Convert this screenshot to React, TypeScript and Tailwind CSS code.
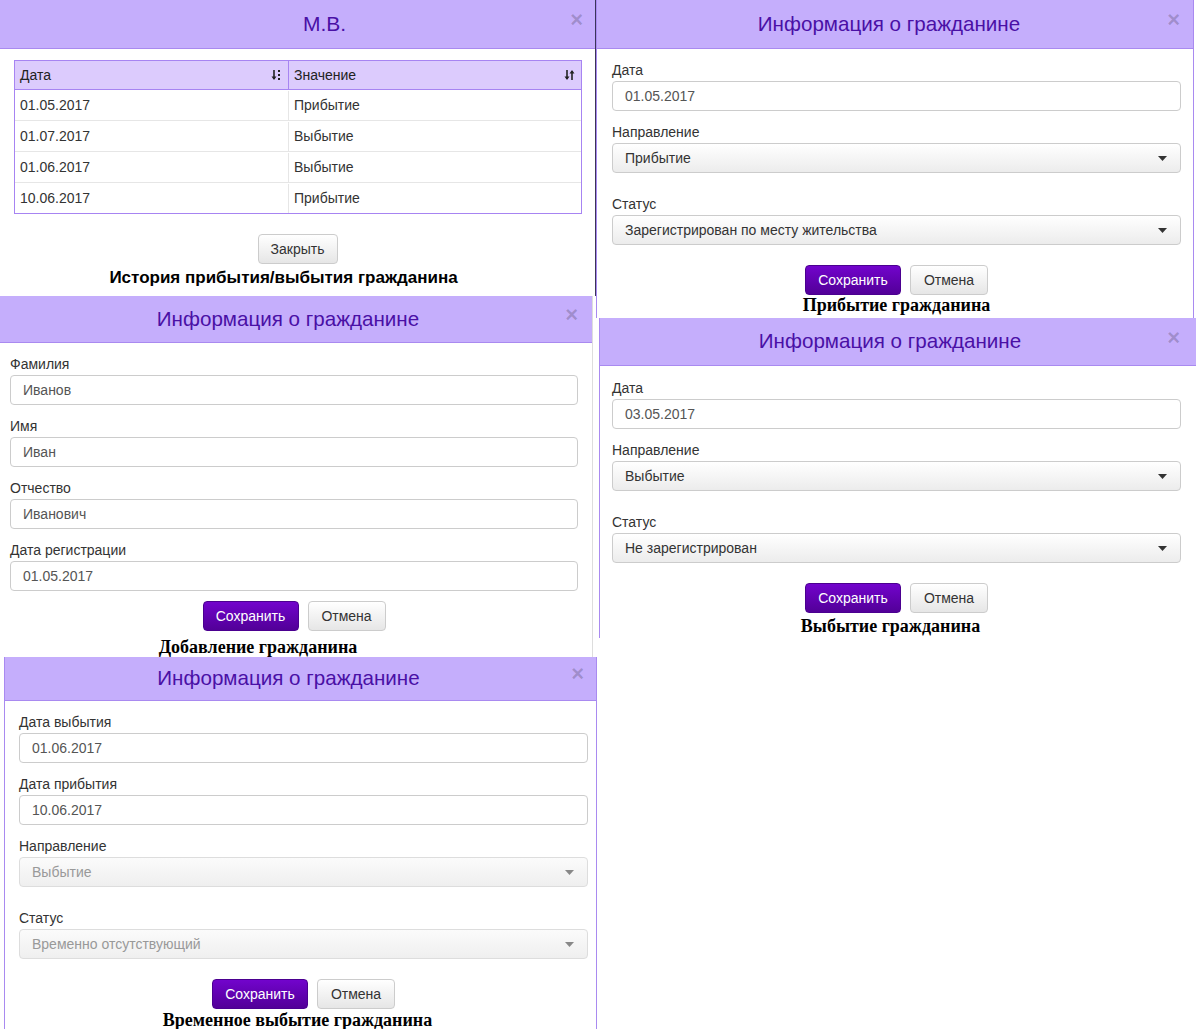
import React from "react";

const FONT = { fontFamily: '"Liberation Sans", Arial, sans-serif' };

function CloseX({ top, right }: { top: number; right: number }) {
  return (
    <span
      className="absolute text-[22px] font-bold leading-none text-black/20"
      style={{ top, right }}
    >
      ×
    </span>
  );
}

function Header({
  title,
  h,
  closeTop,
  closeRight,
  shift,
  size = 20.6,
}: {
  title: string;
  h: number;
  closeTop: number;
  closeRight: number;
  shift: number;
  size?: number;
}) {
  return (
    <div
      className="relative flex shrink-0 items-center justify-center border-b border-[#a98af0] bg-[#c5aefc]"
      style={{ height: h }}
    >
      <span
        className="text-[#4a10a6]"
        style={{ fontSize: size, marginLeft: shift > 0 ? shift * 2 : 0, marginRight: shift < 0 ? -shift * 2 : 0 }}
      >
        {title}
      </span>
      <CloseX top={closeTop} right={closeRight} />
    </div>
  );
}

function Label({ children }: { children: React.ReactNode }) {
  return <div className="h-[20px] text-[14px] leading-[22px] text-[#333]">{children}</div>;
}

function Input({ value }: { value: string }) {
  return (
    <div className="mt-[2px] flex h-[30px] items-center rounded-[4px] border border-[#cccccc] bg-white pl-[12px] text-[14px] text-[#555]">
      {value}
    </div>
  );
}

function Caret({ light }: { light?: boolean }) {
  return (
    <svg width="9" height="5" viewBox="0 0 9 5" className="absolute right-[13px] top-[12px]">
      <path d="M0 0 L9 0 L4.5 5 Z" fill={light ? "#888" : "#333"} />
    </svg>
  );
}

function Select({ value, disabled }: { value: string; disabled?: boolean }) {
  return (
    <div
      className={
        disabled
          ? "relative mt-[2px] flex h-[30px] items-center rounded-[4px] border border-[#dddddd] bg-linear-to-b from-[#fbfbfb] to-[#efefef] pl-[12px] text-[14px] text-[#999]"
          : "relative mt-[2px] flex h-[30px] items-center rounded-[4px] border border-[#cccccc] bg-linear-to-b from-white to-[#ececec] pl-[12px] text-[14px] text-[#333]"
      }
    >
      {value}
      <Caret light={disabled} />
    </div>
  );
}

function Buttons() {
  return (
    <div className="flex justify-center gap-[9px]">
      <div className="flex h-[30px] w-[96px] items-center justify-center rounded-[4px] border border-[#4b0090] bg-linear-to-b from-[#7204cc] to-[#520098] text-[14px] text-white">
        Сохранить
      </div>
      <div className="flex h-[30px] w-[78px] items-center justify-center rounded-[4px] border border-[#cccccc] bg-linear-to-b from-white to-[#e6e6e6] text-[14px] text-[#333]">
        Отмена
      </div>
    </div>
  );
}

function Caption({ text, shift = 0 }: { text: string; shift?: number }) {
  return (
    <div
      className="text-center text-[18px] font-bold leading-[20px] text-black"
      style={{
        fontFamily: '"Liberation Serif", "Times New Roman", serif',
        marginLeft: shift < 0 ? 0 : shift * 2,
        marginRight: shift < 0 ? -shift * 2 : 0,
      }}
    >
      {text}
    </div>
  );
}

function SortIconA() {
  return (
    <svg width="10" height="12" viewBox="0 0 10 12">
      <path d="M3 1 V10" stroke="#222" strokeWidth="1.6" />
      <path d="M0.5 7.5 L3 11 L5.5 7.5 Z" fill="#222" />
      <rect x="7" y="1" width="2" height="2" fill="#222" />
      <rect x="7" y="5" width="2" height="2" fill="#222" />
      <rect x="7" y="9" width="2" height="2" fill="#222" />
    </svg>
  );
}

function SortIconB() {
  return (
    <svg width="11" height="12" viewBox="0 0 11 12">
      <path d="M3 1 V10" stroke="#222" strokeWidth="1.6" />
      <path d="M0.5 7.5 L3 11 L5.5 7.5 Z" fill="#222" />
      <path d="M8 2 V11" stroke="#222" strokeWidth="1.6" />
      <path d="M5.5 4.5 L8 1 L10.5 4.5 Z" fill="#222" />
    </svg>
  );
}

function HistoryPanel() {
  const rows = [
    ["01.05.2017", "Прибытие"],
    ["01.07.2017", "Выбытие"],
    ["01.06.2017", "Выбытие"],
    ["10.06.2017", "Прибытие"],
  ];
  return (
    <div className="flex h-[296px] w-[596px] shrink-0 flex-col overflow-hidden border-r border-[#3a3458] bg-white">
      <Header title="М.В." h={49} closeTop={9} closeRight={12} shift={27} size={21} />
      <div className="px-[14px] pt-[11px] pr-[13px]">
        <div className="border border-[#a784f2]">
          <div className="flex h-[29px] border-b border-[#a784f2] bg-[#dccbfd] text-[14px] text-[#222]">
            <div className="flex w-[274px] items-center justify-between border-r border-[#a784f2] pl-[5px] pr-[7px]">
              <span>Дата</span>
              <SortIconA />
            </div>
            <div className="flex flex-1 items-center justify-between pl-[5px] pr-[6px]">
              <span>Значение</span>
              <SortIconB />
            </div>
          </div>
          {rows.map((r, i) => (
            <div
              key={i}
              className={
                i < rows.length - 1
                  ? "flex h-[31px] border-b border-[#e6e6e6] pt-[1px] text-[14px] text-[#333]"
                  : "flex h-[30px] pt-[1px] text-[14px] text-[#333]"
              }
            >
              <div className="flex w-[274px] items-center border-r border-[#e6e6e6] pl-[5px]">{r[0]}</div>
              <div className="flex flex-1 items-center pl-[5px]">{r[1]}</div>
            </div>
          ))}
        </div>
      </div>
      <div className="mt-[20px] flex justify-center">
        <div className="flex h-[30px] w-[80px] items-center justify-center rounded-[4px] border border-[#cccccc] bg-linear-to-b from-white to-[#e6e6e6] text-[14px] text-[#333]">
          Закрыть
        </div>
      </div>
      <div
        className="mt-[3px] mr-[28px] text-center text-[17px] font-bold leading-[22px] text-black"
        style={{ ...FONT }}
      >
        История прибытия/выбытия гражданина
      </div>
    </div>
  );
}

function AddPanel() {
  return (
    <div className="flex h-[361px] w-[593px] shrink-0 flex-col overflow-hidden border-r border-[#dddddd] bg-white">
      <Header title="Информация о гражданине" h={47} closeTop={8} closeRight={14} shift={-8} />
      <div className="flex flex-col pl-[10px] pr-[14px] pt-[10px]">
        <Label>Фамилия</Label>
        <Input value="Иванов" />
        <div className="h-[10px]" />
        <Label>Имя</Label>
        <Input value="Иван" />
        <div className="h-[10px]" />
        <Label>Отчество</Label>
        <Input value="Иванович" />
        <div className="h-[10px]" />
        <Label>Дата регистрации</Label>
        <Input value="01.05.2017" />
        <div className="h-[10px]" />
        <Buttons />
        <div className="h-[6px]" />
        <Caption text="Добавление гражданина" shift={-36} />
      </div>
    </div>
  );
}

function TempPanel() {
  return (
    <div className="ml-[4px] flex h-[372px] w-[593px] shrink-0 flex-col overflow-hidden border-l border-r border-[#a98af0] bg-white">
      <Header title="Информация о гражданине" h={44} closeTop={6} closeRight={12} shift={-12} />
      <div className="flex flex-col pl-[14px] pr-[8px] pt-[10px]">
        <Label>Дата выбытия</Label>
        <Input value="01.06.2017" />
        <div className="h-[10px]" />
        <Label>Дата прибытия</Label>
        <Input value="10.06.2017" />
        <div className="h-[10px]" />
        <Label>Направление</Label>
        <Select value="Выбытие" disabled />
        <div className="h-[20px]" />
        <Label>Статус</Label>
        <Select value="Временно отсутствующий" disabled />
        <div className="h-[20px]" />
        <Buttons />
        <div className="h-[1px]" />
        <Caption text="Временное выбытие гражданина" shift={-6} />
      </div>
    </div>
  );
}

function ArrivalPanel() {
  return (
    <div className="flex h-[318px] w-[598px] shrink-0 flex-col overflow-hidden border-l border-r border-[#a98af0] bg-white">
      <Header title="Информация о гражданине" h={49} closeTop={9} closeRight={13} shift={-6} />
      <div className="flex flex-col pl-[15px] pr-[12px] pt-[10px]">
        <Label>Дата</Label>
        <Input value="01.05.2017" />
        <div className="h-[10px]" />
        <Label>Направление</Label>
        <Select value="Прибытие" />
        <div className="h-[20px]" />
        <Label>Статус</Label>
        <Select value="Зарегистрирован по месту жительства" />
        <div className="h-[20px]" />
        <Buttons />
        <div className="h-[0px]" />
        <Caption text="Прибытие гражданина" />
      </div>
    </div>
  );
}

function DeparturePanel() {
  return (
    <div className="ml-[3px] flex h-[320px] w-[597px] shrink-0 flex-col overflow-hidden border-l border-[#a98af0] bg-white">
      <Header title="Информация о гражданине" h={48} closeTop={9} closeRight={16} shift={-8} />
      <div className="flex flex-col pl-[12px] pr-[15px] pt-[11px]">
        <Label>Дата</Label>
        <Input value="03.05.2017" />
        <div className="h-[10px]" />
        <Label>Направление</Label>
        <Select value="Выбытие" />
        <div className="h-[20px]" />
        <Label>Статус</Label>
        <Select value="Не зарегистрирован" />
        <div className="h-[20px]" />
        <Buttons />
        <div className="h-[3px]" />
        <Caption text="Выбытие гражданина" shift={-6} />
      </div>
    </div>
  );
}

export default function App() {
  return (
    <div className="flex h-[1029px] w-[1196px] overflow-hidden bg-white" style={FONT}>
      <div className="flex w-[596px] shrink-0 flex-col">
        <HistoryPanel />
        <AddPanel />
        <TempPanel />
      </div>
      <div className="flex w-[600px] shrink-0 flex-col">
        <ArrivalPanel />
        <DeparturePanel />
      </div>
    </div>
  );
}
